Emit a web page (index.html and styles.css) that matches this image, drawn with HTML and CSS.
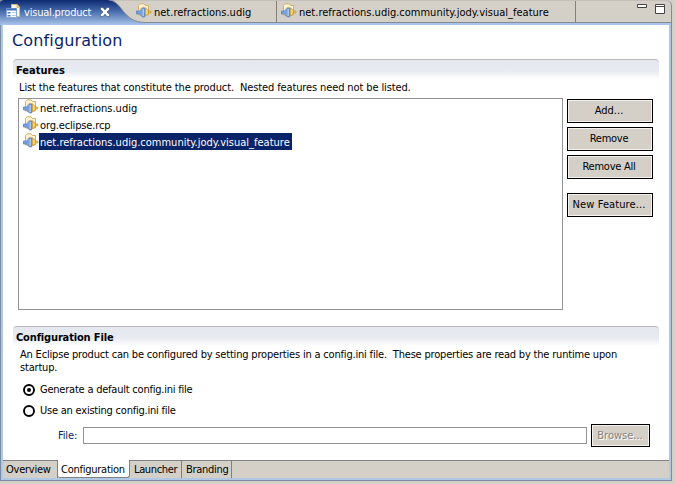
FILE: index.html
```
<!DOCTYPE html>
<html lang="en">
<head>
<meta charset="utf-8">
<title>visual.product</title>
<link rel="stylesheet" href="styles.css">
</head>
<body>
<svg class="defs" width="0" height="0" aria-hidden="true">
  <symbol id="feature" viewBox="0 0 16 16">
    <path d="M2.500 12V2.500L4 .8H8L9.500 2.500H12.500V12z" fill="#fdf3d6" stroke="#d3ae62"/>
    <path d="M4.500 5.500Q7 3 10 5" fill="none" stroke="#d9b56c" stroke-width=".8"/>
    <path d="M9.500 5L12.500 7.500V10.500L9.500 13z" fill="#f5d468" stroke="#b98e35" stroke-width=".7"/>
    <path d="M12.500 8H15V10H12.500z" fill="#e9c355" stroke="#b98e35" stroke-width=".5"/>
    <path d="M.5 8H3.500L6.500 5H8.500V14H6.500L3.500 11H.5z" fill="#78a2dd" stroke="#5b80bd" stroke-width=".8"/>
    <path d="M6.500 6H8V13H6.500z" fill="#a9c6ee"/>
  </symbol>
</svg>
<div class="editor">
  <div class="tabs">
    <div class="tab active">
      <svg class="tab-shape" width="145" height="25" viewBox="0 0 145 25">
        <defs><linearGradient id="tabfill" x1="0" y1="0" x2="0" y2="1">
          <stop offset="0" stop-color="#0d2a70"/><stop offset=".4" stop-color="#3f63a6"/><stop offset="1" stop-color="#a9c4ea"/>
        </linearGradient></defs>
        <path d="M0 25V4Q0 0 4 0H108C123 1 122 22 145 22V25z" fill="url(#tabfill)"/>
        <path d="M108 -.5C123 .5 122 22.500 145 22.500" fill="none" stroke="#8b9098"/>
      </svg>
      <svg class="ico" width="16" height="16" viewBox="0 0 16 16">
        <path d="M5.500 .5H11L13.500 3V12.500H5.500z" fill="#fff9df" stroke="#d8bb7c"/>
        <path d="M11 .5V3.500H13.500" fill="#edcb80" stroke="#d8bb7c"/>
        <path d="M.5 4.500H10.500V13.500H.5z" fill="#fff" stroke="#86a9d8"/>
        <path d="M.5 4.500H10.500V6.500H.5z" fill="#3f70ba"/>
        <path d="M1.500 8H4.500V9.500H1.500zM1.500 11H4.500V12.500H1.500z" fill="#4b79bb"/>
        <path d="M6 8.500H10M6 11.500H10" stroke="#b5cbe8"/>
      </svg>
      <span class="t-active">visual.product</span>
      <svg class="close" width="10" height="10" viewBox="0 0 10 10"><path d="M.5 .5H3L5 3L7 .5H9.500V2.500L7 5L9.500 7.500V9.500H7L5 7L3 9.500H.5V7.500L3 5L.5 2.500z" fill="#fff" stroke="#26365c" stroke-width=".5"/></svg>
    </div>
    <div class="tab second"><svg class="ico" width="16" height="16"><use href="#feature"/></svg><span>net.refractions.udig</span></div>
    <div class="tab third"><svg class="ico" width="16" height="16"><use href="#feature"/></svg><span>net.refractions.udig.community.jody.visual_feature</span></div>
    <svg class="controls" width="30" height="13" viewBox="0 0 30 13">
      <path d="M.5 3.500H9.500V6.500H.5z" fill="#fff" stroke="#444"/>
      <path d="M18.500 3.500H27.500V12.500H18.500zM18.500 5.500H27.500" fill="#fff" stroke="#444"/>
    </svg>
  </div>
  <div class="page">
    <h1>Configuration</h1>
    <section class="features">
      <h2>Features</h2>
      <p class="desc">List the features that constitute the product.&nbsp; Nested features need not be listed.</p>
      <div class="row">
        <ul class="list">
          <li><svg class="ico" width="16" height="16"><use href="#feature"/></svg><span>net.refractions.udig</span></li>
          <li><svg class="ico" width="16" height="16"><use href="#feature"/></svg><span class="rcp">org.eclipse.rcp</span></li>
          <li class="selected"><svg class="ico" width="16" height="16"><use href="#feature"/></svg><span>net.refractions.udig.community.jody.visual_feature</span></li>
        </ul>
        <div class="buttons">
          <button>Add...</button>
          <button class="tight">Remove</button>
          <button class="tight">Remove All</button>
          <button class="new">New Feature...</button>
        </div>
      </div>
    </section>
    <section class="config">
      <h2 class="h-config">Configuration File</h2>
      <p class="desc">An Eclipse product can be configured by setting properties in a config.ini file.&nbsp; These properties are read by the runtime upon<br>startup.</p>
      <label class="radio"><svg width="12" height="12"><circle cx="6" cy="6" r="5" fill="#fff" stroke="#000" stroke-width="1.900"/><circle cx="6" cy="6" r="2" fill="#000"/></svg><span>Generate a default config.ini file</span></label>
      <label class="radio"><svg width="12" height="12"><circle cx="6" cy="6" r="5" fill="#fff" stroke="#000" stroke-width="1.900"/></svg><span>Use an existing config.ini file</span></label>
      <div class="file"><span class="file-label">File:</span><div class="input"></div><button class="browse" disabled>Browse...</button></div>
    </section>
  </div>
  <div class="pages">
    <div class="pt overview">Overview</div>
    <div class="pt current">Configuration</div>
    <div class="pt launcher">Launcher</div>
    <div class="pt branding">Branding</div>
  </div>
</div>
</body>
</html>
```
FILE: styles.css
```
* { box-sizing: border-box; }
body {
  margin: 0;
  width: 675px;
  height: 484px;
  overflow: hidden;
  background: #d4d0c8;
  color: #000;
  font: 11px/13px "DejaVu Sans Condensed", "DejaVu Sans", sans-serif;
}
h1, h2, p, ul { margin: 0; padding: 0; }
svg { display: block; flex: none; }
.defs { position: absolute; }
span, p { white-space: nowrap; }

.editor {
  display: flex;
  flex-direction: column;
  width: 672px;
  height: 481px;
  border: solid #7a8ba3;
  border-width: 0 1px 1px;
  border-top-right-radius: 6px;
}
.tabs {
  display: flex;
  height: 25px;
  flex: none;
  border-top: 1px solid #c5c1ba;
  border-top-right-radius: 6px;
  background: linear-gradient(#a9c4ea, #a9c4ea) 0 100% / 100% 2px no-repeat,
              linear-gradient(#848b94, #848b94) 0 21px / 100% 1px no-repeat;
}
.tab { display: flex; height: 21px; border-right: 1px solid #848078; }
.tab > span { margin-top: 5px; }
.tab .ico { margin-top: 2px; }
.active { position: relative; width: 134px; padding-left: 5px; border: 0; color: #fff; margin-top: -1px; }
.active > .ico, .active > span, .active > .close { position: relative; }
.tab-shape { position: absolute; left: -1px; top: 0; }
.active .ico { margin-top: 4px; }
.active > span { margin: 6px 0 0 2px; letter-spacing: -0.2px; }
.close { margin: 7px 0 0 9px; }
.second { width: 142px; padding-left: 1px; position: relative; }
.second span { margin-left: 2px; }
.third { width: 299px; padding-left: 4px; }
.third span { margin-left: 2px; }
.controls { margin: 0 0 0 61px; }

.page {
  flex: 1;
  border: solid #afc8e4;
  border-width: 0 2px;
  background: #fff;
  padding: 0 9px 0 10px;
}
h1 {
  height: 34px;
  padding-top: 6px;
  font: 16px/20px "DejaVu Sans", sans-serif;
  color: #0a246a;
  letter-spacing: 0.15px;
}
h1 { margin-left: -1px; }
section { width: 646px; }
h2 {
  height: 20px;
  padding: 4px 0 0 3px;
  border-top: 1px solid #b9b9bc;
  border-radius: 4px 4px 0 0;
  background: linear-gradient(#e4e7ed, #e8ebf1 60%, #fff);
  font: bold 11px/13px "DejaVu Sans Condensed", sans-serif;
}
.h-config { letter-spacing: -0.15px; }
.features { height: 267px; }
.features .desc { margin: 2px 0 4px 6px; letter-spacing: -0.12px; }
.row { display: flex; padding-left: 5px; }
.list {
  width: 545px;
  height: 212px;
  border: 1px solid #919396;
  padding: 0 0 0 4px;
  list-style: none;
}
.list li { display: flex; height: 17px; }
.list span { height: 17px; padding: 3px 2px 0 1px; }
.rcp { letter-spacing: -0.15px; }
.selected span { background: #0a246a; color: #fff; }
.buttons { display: flex; flex-direction: column; gap: 4px; padding: 1px 0 0 4px; }
button {
  width: 86px;
  height: 24px;
  padding: 0 2px 1px 0;
  border: 1px solid #000;
  box-shadow: inset 0 0 0 1px #f4f2ee;
  background: #d4d0c8;
  color: #000;
  font: inherit;
  white-space: nowrap;
}
.tight { letter-spacing: -0.25px; }
.new { margin-top: 10px; letter-spacing: 0.1px; }

.config .desc { margin: 2px 0 0 7px; letter-spacing: -0.187px; }
.radio { display: flex; align-items: center; height: 21px; padding-left: 10px; gap: 5px; letter-spacing: -0.22px; }
.desc + .radio { margin-top: 5px; }
.file { display: flex; align-items: center; margin-top: 3px; padding-left: 45px; height: 23px; }
.file-label { width: 25px; color: #0a246a; letter-spacing: -0.15px; }
.input { width: 504px; height: 17px; border: 1px solid #919396; }
.browse { width: 59px; height: 23px; margin-left: 4px; padding-right: 1px; color: #85827d; text-shadow: 1px 1px #fff; }

.pages {
  display: flex;
  flex: none;
  height: 20px;
  border: solid #afc8e4;
  border-width: 0 2px 2px;
  background: linear-gradient(#808080, #808080) 0 0 / 100% 1px no-repeat #d4d0c8;
  letter-spacing: -0.25px;
}
.pt { height: 18px; border-right: 1px solid #808080; padding: 3px 0 0 3px; white-space: nowrap; }
.overview { width: 55px; }
.current { width: 72px; background: #fff; border-bottom: 1px solid #808080; border-radius: 0 0 3px 3px; }
.launcher { width: 52px; padding-left: 4px; letter-spacing: -0.35px; }
.branding { width: 50px; padding-left: 4px; letter-spacing: -0.3px; }
```
